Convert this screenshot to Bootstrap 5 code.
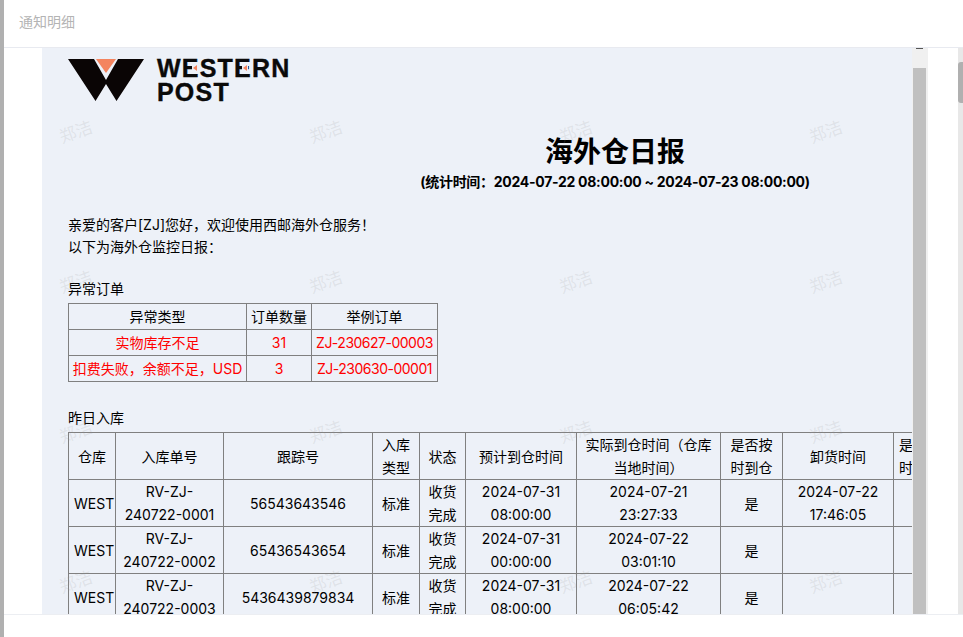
<!doctype html>
<html lang="zh">
<head>
<meta charset="utf-8">
<link href="https://cdn.jsdelivr.net/npm/bootstrap@5.3.0/dist/css/bootstrap.min.css" rel="stylesheet">
<style>
html,body{height:100%;overflow:hidden;background:#b0b0b0}
body{font-family:Inter,"Noto Sans CJK SC",sans-serif;font-size:14px;color:#000}
.shell{margin-left:4px;height:100vh;background:#fff;border:0;border-radius:0}
.shell-head{height:48px;padding:0 15px 5px;border-bottom:1px solid #e8eaf0;border-radius:0}
.shell-title{font-size:14px;color:#b4b4b4;font-weight:400}
.shell-body{min-height:0;overflow:hidden}
.shell-foot{height:23px;border-top:1px solid #eceef2;flex-shrink:0}
.gutter{width:38px;flex-shrink:0}
.doc{width:870px;background:#edf1f8;position:relative;overflow:hidden;padding:11px 0 0 26px}
.sb-inner{width:16px;background:#f0f0f0;flex-shrink:0;padding:20px 2px 0 1px;position:relative}
.sb-inner i{display:block;height:100%;background:#c0c0c0}
.sb-inner b{position:absolute;top:0;left:4px;width:7px;height:1px;background:#555}
.pad{width:30px;flex-shrink:0}
.sb-outer{width:5px;background:#e8e8e8;flex-shrink:0;padding-top:14px}
.sb-outer i{display:block;height:41px;background:#b0b0b0;border-radius:3px 0 0 3px}
.brand{height:42px;gap:13px}
.brand-words{font-family:"Liberation Sans",sans-serif;font-weight:700;font-size:25px;line-height:24px;letter-spacing:1.2px;color:#0a0a0a;position:relative;margin-top:-3px;-webkit-text-stroke:.4px #0a0a0a}
.brand-words div{height:24px}
.spark{position:absolute;top:9px;width:6px;height:6px;background:#edf1f8}
.spark::after{content:"";position:absolute;left:1px;top:0;border-style:solid;border-width:3px 4px 3px 0;border-color:transparent #f4845f transparent transparent}
.spark-a{left:35px}
.spark-b{left:85px}
.headline{margin:32px 0 0;text-align:center;width:1094px}
.headline h1{font-size:28px;line-height:38px;font-weight:700;margin:0}
.headline p{font-size:14px;font-weight:700;line-height:22px;margin:0;letter-spacing:-.28px}
.greet{margin:21px 0 0;line-height:22px}
.sec{margin:20px 0 2px;line-height:22px;height:23px}
.sec2{margin-top:25px}
.tb{border-collapse:collapse;table-layout:fixed;text-align:center;background:transparent}
.tb th,.tb td{border:1px solid #808080;font-weight:400;padding:0;vertical-align:middle}
.tb1 tr{height:26px}
.tb1 td,.tb1 th{line-height:21px}
.tb1 .bad{color:#f00}
.tb1 .ref-id{letter-spacing:-.5px}
.tb2{width:1000px}
.tb2 tr{height:47px}
.tb2 td,.tb2 th{padding:0 5px;overflow:hidden;line-height:23px}
.wm-layer{position:absolute;inset:0;pointer-events:none;display:grid;grid-template-columns:repeat(4,250px);grid-auto-rows:150px;padding:74px 0 0 16px}
.wm-layer span{width:36px;text-align:center;height:20px;line-height:20px;font-size:17px;color:rgba(150,150,150,.17);transform:rotate(-20deg);white-space:nowrap}
</style>
</head>
<body>
<div class="modal-content shell d-flex flex-column">
  <div class="modal-header shell-head d-flex align-items-center flex-shrink-0"><h5 class="modal-title shell-title">通知明细</h5></div>
  <div class="modal-body shell-body d-flex flex-grow-1 p-0">
    <div class="gutter"></div>
    <div class="doc flex-shrink-0">
      <div class="d-flex brand">
        <svg width="76" height="42" viewBox="68 59 76 42"><polygon fill="#0a0505" points="68,59 94,59 106,80 118,59 144,59 116.500,101 106,84 95.500,101"/><polygon fill="#f4845f" points="96,59 116,59 106,73"/></svg>
        <div class="brand-words"><div>WESTERN</div><div>POST</div><span class="spark spark-a"></span><span class="spark spark-b"></span></div>
      </div>
      <div class="headline"><h1>海外仓日报</h1><p>(统计时间：2024-07-22 08:00:00 ~ 2024-07-23 08:00:00)</p></div>
      <p class="greet">亲爱的客户[ZJ]您好，欢迎使用西邮海外仓服务！<br>以下为海外仓监控日报：</p>
      <div class="sec">异常订单</div>
      <table class="tb tb1">
        <colgroup><col style="width:178px"><col style="width:65px"><col style="width:126px"></colgroup>
        <tr><th>异常类型</th><th>订单数量</th><th>举例订单</th></tr>
        <tr class="bad"><td>实物库存不足</td><td>31</td><td class="ref-id">ZJ-230627-00003</td></tr>
        <tr class="bad"><td>扣费失败，余额不足，USD</td><td>3</td><td class="ref-id">ZJ-230630-00001</td></tr>
      </table>
      <div class="sec sec2">昨日入库</div>
      <table class="tb tb2">
        <colgroup><col style="width:47px"><col style="width:108px"><col style="width:149px"><col style="width:47px"><col style="width:46px"><col style="width:111px"><col style="width:144px"><col style="width:62px"><col style="width:111px"><col style="width:175px"></colgroup>
        <tr><th>仓库</th><th>入库单号</th><th>跟踪号</th><th>入库类型</th><th>状态</th><th>预计到仓时间</th><th>实际到仓时间（仓库当地时间）</th><th>是否按时到仓</th><th>卸货时间</th><th class="text-start">是否及<br>时卸货</th></tr>
        <tr><td>WEST</td><td>RV-ZJ-240722-0001</td><td>56543643546</td><td>标准</td><td>收货完成</td><td>2024-07-31 08:00:00</td><td>2024-07-21 23:27:33</td><td>是</td><td>2024-07-22 17:46:05</td><td></td></tr>
        <tr><td>WEST</td><td>RV-ZJ-240722-0002</td><td>65436543654</td><td>标准</td><td>收货完成</td><td>2024-07-31 00:00:00</td><td>2024-07-22 03:01:10</td><td>是</td><td></td><td></td></tr>
        <tr><td>WEST</td><td>RV-ZJ-240722-0003</td><td>5436439879834</td><td>标准</td><td>收货完成</td><td>2024-07-31 08:00:00</td><td>2024-07-22 06:05:42</td><td>是</td><td></td><td></td></tr>
      </table>
      <div class="wm-layer">
        <span>郑洁</span><span>郑洁</span><span>郑洁</span><span>郑洁</span>
        <span>郑洁</span><span>郑洁</span><span>郑洁</span><span>郑洁</span>
        <span>郑洁</span><span>郑洁</span><span>郑洁</span><span>郑洁</span>
        <span>郑洁</span><span>郑洁</span><span>郑洁</span><span>郑洁</span>
      </div>
    </div>
    <div class="sb-inner"><b></b><i></i></div>
    <div class="pad"></div>
    <div class="sb-outer"><i></i></div>
  </div>
  <div class="modal-footer shell-foot p-0"></div>
</div>
<script src="https://cdn.jsdelivr.net/npm/bootstrap@5.3.0/dist/js/bootstrap.bundle.min.js"></script>
</body>
</html>
